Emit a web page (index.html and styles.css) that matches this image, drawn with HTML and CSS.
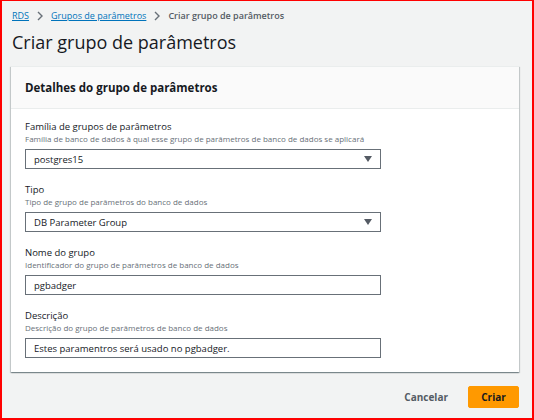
FILE: index.html
```html
<!DOCTYPE html>
<html lang="pt-BR">
<head>
<meta charset="utf-8">
<link rel="stylesheet" href="styles.css">
</head>
<body>
<div class="frame">
  <nav class="crumbs">
    <a class="crumb-link">RDS</a>
    <svg class="chev" width="8" height="10" viewBox="0 0 8 10"><path d="M2 1l4 4-4 4" fill="none" stroke="#687078" stroke-width="1.4"/></svg>
    <a class="crumb-link">Grupos de parâmetros</a>
    <svg class="chev" width="8" height="10" viewBox="0 0 8 10"><path d="M2 1l4 4-4 4" fill="none" stroke="#687078" stroke-width="1.4"/></svg>
    <span class="crumb-current">Criar grupo de parâmetros</span>
  </nav>
  <h1 class="title">Criar grupo de parâmetros</h1>
  <section class="card">
    <header class="card-head">Detalhes do grupo de parâmetros</header>
    <div class="card-body">
      <div class="field">
        <div class="label">Família de grupos de parâmetros</div>
        <div class="desc">Família de banco de dados à qual esse grupo de parâmetros de banco de dados se aplicará</div>
        <div class="control select"><span>postgres15</span><svg width="8" height="6" viewBox="0 0 8 6"><path d="M0 0h8L4 6z" fill="#545b64"/></svg></div>
      </div>
      <div class="field">
        <div class="label">Tipo</div>
        <div class="desc">Tipo de grupo de parâmetros do banco de dados</div>
        <div class="control select"><span>DB Parameter Group</span><svg width="8" height="6" viewBox="0 0 8 6"><path d="M0 0h8L4 6z" fill="#545b64"/></svg></div>
      </div>
      <div class="field">
        <div class="label">Nome do grupo</div>
        <div class="desc">Identificador do grupo de parâmetros de banco de dados</div>
        <div class="control"><span>pgbadger</span></div>
      </div>
      <div class="field">
        <div class="label">Descrição</div>
        <div class="desc">Descrição do grupo de parâmetros de banco de dados</div>
        <div class="control"><span>Estes paramentros será usado no pgbadger.</span></div>
      </div>
    </div>
  </section>
  <div class="actions">
    <button class="btn-link">Cancelar</button>
    <button class="btn-primary">Criar</button>
  </div>
</div>
</body>
</html>
```

FILE: styles.css
```css
* { box-sizing: border-box; }
html, body { margin: 0; padding: 0; }
body {
  font-family: "Open Sans", "Noto Sans", sans-serif;
  color: #16191f;
}
.frame {
  width: 534px;
  height: 420px;
  border: 2px solid #ff0000;
  border-top-width: 1px;
  background: #f2f3f3;
  padding: 7px 13px 0 10px;
  overflow: hidden;
}
.crumbs {
  display: flex;
  align-items: center;
  gap: 7px;
  font-size: 9px;
  line-height: 14px;
  height: 16px;
}
.crumb-link {
  color: #0073bb;
  text-decoration: underline;
}
.crumb-current { color: #545b64; font-weight: 600; }
.chev { display: block; }
.title {
  margin: 5px 0 0 0;
  font-size: 18px;
  font-weight: 400;
  line-height: 26px;
  color: #16191f;
}
.card {
  margin: 11px 0 0 -1px;
  background: #fff;
  box-shadow: 0 1px 1px 0 rgba(0,28,36,.3), 1px 1px 1px 0 rgba(0,28,36,.15), -1px 1px 1px 0 rgba(0,28,36,.15);
  border-top: 1px solid #eaeded;
}
.card-head {
  height: 42px;
  display: flex;
  align-items: center;
  padding-left: 14px;
  background: #fafafa;
  border-bottom: 1px solid #eaeded;
  font-size: 11.5px;
  font-weight: 700;
}
.card-body {
  padding: 11px 14px 14px 14px;
  display: flex;
  flex-direction: column;
  gap: 14px;
}
.field { width: 356px; }
.label {
  font-size: 9.5px;
  line-height: 13px;
  color: #16191f;
}
.desc {
  font-size: 8px;
  line-height: 12px;
  color: #687078;
  margin-bottom: 4px;
}
.control {
  height: 20px;
  border: 1px solid #687078;
  display: flex;
  align-items: center;
  justify-content: space-between;
  padding: 0 8px 0 8px;
  font-size: 9.5px;
  color: #16191f;
  background: #fff;
}
.actions {
  display: flex;
  justify-content: flex-end;
  align-items: center;
  gap: 20px;
  margin-top: 14px;
}
.btn-link {
  background: none;
  border: none;
  font-family: inherit;
  font-size: 10px;
  font-weight: 700;
  color: #545b64;
  padding: 0;
}
.btn-primary {
  background: #ff9900;
  border: 1px solid #ff9900;
  border-radius: 2px;
  width: 51px;
  height: 22px;
  font-family: inherit;
  font-size: 10px;
  font-weight: 700;
  color: #16191f;
  padding: 0;
}
```
